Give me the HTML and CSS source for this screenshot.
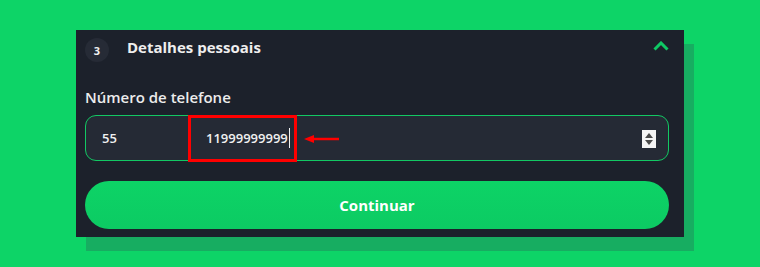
FILE: index.html
```html
<!DOCTYPE html>
<html lang="pt-BR">
<head>
  <meta charset="UTF-8">
  <title>Detalhes pessoais</title>
  <link rel="stylesheet" href="styles.css">
</head>
<body>

  <div class="card">
    <div class="step-header">
      <span class="step-num">3</span>
      <span class="step-title">Detalhes pessoais</span>
      <svg class="chevron" width="16" height="10" viewBox="0 0 16 10">
        <path d="M1.5 8.5 L8 2 L14.5 8.5" fill="none" stroke="#0fc864" stroke-width="3"/>
      </svg>
    </div>

    <label class="field-label">Número de telefone</label>
    <div class="phone-input">
      <span class="ddi">55</span>
      <span class="number">11999999999<span class="caret"></span></span>
      <span class="spinner">
        <svg width="14" height="18" viewBox="0 0 14 18">
          <rect width="14" height="18" fill="#f4f4f4"/>
          <path d="M7 3 L11 8 L3 8 Z" fill="#4a4a4a"/>
          <path d="M7 15 L11 10 L3 10 Z" fill="#4a4a4a"/>
        </svg>
      </span>

      <!-- annotation -->
      <div class="mark-box"></div>
      <svg class="mark-arrow" width="36" height="10" viewBox="0 0 36 10">
        <path d="M8 5 H35" stroke="#f00" stroke-width="2.5"/>
        <path d="M0 5 L10 1 L10 9 Z" fill="#f00"/>
      </svg>
    </div>

    <button class="btn-continue">Continuar</button>
  </div>

</body>
</html>
```

FILE: styles.css
```css
body {
  margin: 0;
  background: #0dd467;
  height: 267px;
  overflow: hidden;
  font-family: 'Open Sans', Lato, sans-serif;
}

.card {
  margin: 30px 0 0 76px;
  width: 608px;
  height: 207px;
  box-sizing: border-box;
  padding: 8px 15px 0 9px;
  background: #1c212b;
  box-shadow: 10px 14px 0 #17ad61;
  display: flex;
  flex-direction: column;
}

.step-header {
  display: flex;
  align-items: center;
  height: 24px;
}

.step-num {
  width: 24px;
  height: 24px;
  border-radius: 50%;
  background: #262b36;
  color: #f0f0f0;
  font-size: 11px;
  font-weight: 700;
  display: flex;
  align-items: center;
  justify-content: center;
}

.step-title {
  margin: -6px 0 0 18px;
  color: #eeeeee;
  font-size: 15px;
  font-weight: 700;
  flex: 1;
}

.chevron {
  margin-top: -8px;
}

.field-label {
  margin-top: 25px;
  color: #ececec;
  font-size: 15px;
  font-weight: 600;
}

.phone-input {
  position: relative;
  margin-top: 8px;
  height: 46px;
  box-sizing: border-box;
  border: 1px solid #12c863;
  border-radius: 11px;
  background: #252a35;
  display: flex;
  align-items: center;
  padding: 0 12px 0 16px;
  color: #f0f0f0;
  font-size: 13px;
  font-weight: 600;
}

.ddi {
  width: 104px;
}

.number {
  flex: 1;
  display: flex;
  align-items: center;
}

.caret {
  width: 1px;
  height: 20px;
  background: #f0f0f0;
  margin-left: 1px;
}

.spinner {
  display: flex;
  margin-top: 1px;
}

.mark-box {
  position: absolute;
  left: 102px;
  top: -1px;
  width: 109px;
  height: 47px;
  box-sizing: border-box;
  border: 3px solid #f00;
}

.mark-arrow {
  position: absolute;
  left: 218px;
  top: 18px;
}

.btn-continue {
  margin-top: 20px;
  height: 48px;
  border: none;
  border-radius: 24px;
  background: linear-gradient(#0dd366, #0ccb63);
  color: #ffffff;
  font-family: inherit;
  font-size: 15px;
  font-weight: 700;
  cursor: pointer;
}
```
